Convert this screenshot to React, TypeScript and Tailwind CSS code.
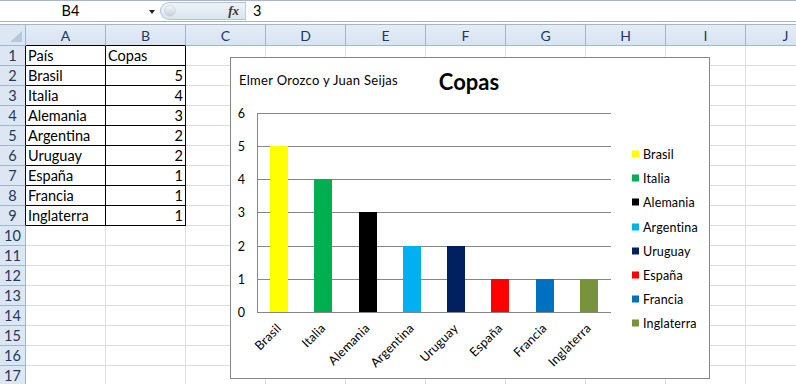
import React from "react";

const cols = ["A", "B", "C", "D", "E", "F", "G", "H", "I", "J"];

const data: [string, number, string][] = [
  ["Brasil", 5, "#FFFF00"],
  ["Italia", 4, "#00B050"],
  ["Alemania", 3, "#000000"],
  ["Argentina", 2, "#00B0F0"],
  ["Uruguay", 2, "#002060"],
  ["España", 1, "#FF0000"],
  ["Francia", 1, "#0070C0"],
  ["Inglaterra", 1, "#77933C"],
];

const font = { fontFamily: "Lato, 'Liberation Sans', sans-serif" };

function FormulaBar() {
  return (
    <>
      <div className="flex h-[22px] border-y border-[#a7b5c7] bg-white">
        <div className="relative flex w-[160px] items-center">
          <span className="w-[141px] text-center text-[14.5px] text-black">B4</span>
          <span className="absolute left-[149px] top-[9px] h-0 w-0 border-x-[3.5px] border-t-[4px] border-x-transparent border-t-[#222]" />
        </div>
        <div className="mt-[1px] flex h-[18px] w-[85px] items-center rounded-l-full border border-r-0 border-[#b4c3d6] bg-gradient-to-b from-[#eef3fa] to-[#d9e4f2]">
          <span className="ml-[3px] h-[12px] w-[12px] rounded-full border border-[#d3dae3] bg-gradient-to-b from-[#f4f6f9] to-[#c7ced8]" />
          <span
            className="ml-auto mr-[6px] text-[13px] font-bold italic text-[#333]"
            style={{ fontFamily: "'Liberation Serif', serif" }}
          >
            fx
          </span>
        </div>
        <div className="flex flex-1 items-center border-l border-[#c3ccd8] pl-[7px] text-[14.5px] text-black">
          3
        </div>
      </div>
      <div className="h-[3px] border-b border-[#a7b5c7] bg-white" />
    </>
  );
}

function Sheet() {
  const rows = Array.from({ length: 17 }, (_, i) => i + 1);
  return (
    <div className="grid grid-cols-[26px_repeat(10,80px)]">
      <div className="relative h-[21px] border-r border-b border-[#9eb6ce] bg-[#dde7f3]">
        <svg className="absolute left-[10px] top-[6px]" width="13" height="12">
          <polygon points="12,0 12,11 0,11" fill="#b9c7d8" />
        </svg>
      </div>
      {cols.map((c, i) => (
        <div
          key={c}
          className={`flex h-[21px] items-center justify-center border-r border-b border-r-[#9eb6ce] bg-gradient-to-b from-[#e4ecf6] to-[#d9e4f1] text-[14px] text-[#203864] ${
            i < 2 ? "border-b-black" : "border-b-[#9eb6ce]"
          }`}
        >
          {c}
        </div>
      ))}
      {rows.map((r) => {
        const inTable = r <= 9;
        return (
          <React.Fragment key={r}>
            <div
              className={`h-[20px] border-r border-b border-b-[#9eb6ce] bg-[#dde7f3] text-center text-[14.5px] leading-[20px] text-[#203864] ${
                inTable ? "border-r-black" : "border-r-[#9eb6ce]"
              }`}
            >
              {r}
            </div>
            {cols.map((c, ci) => {
              const black = inTable && ci < 2;
              let content: React.ReactNode = null;
              if (inTable && ci === 0) content = r === 1 ? "País" : data[r - 2][0];
              if (inTable && ci === 1) content = r === 1 ? "Copas" : data[r - 2][1];
              const right = ci === 1 && r > 1;
              return (
                <div
                  key={c}
                  className={`h-[20px] overflow-hidden whitespace-nowrap border-r border-b px-[2px] text-[14.5px] leading-[20px] text-black ${
                    black ? "border-black" : "border-[#dadcdd]"
                  } ${right ? "text-right" : "text-left"}`}
                >
                  {content}
                </div>
              );
            })}
          </React.Fragment>
        );
      })}
    </div>
  );
}

function Chart() {
  const x0 = 257;
  const x1 = 611;
  const zero = 312;
  const unit = 33.17;
  const step = (x1 - x0) / 8;
  const gy = (v: number) => Math.round(zero - v * unit) + 0.5;
  const legendY = [154, 178, 202, 227, 251, 275, 299, 323];
  return (
    <div className="absolute left-[230px] top-[57px] h-[322px] w-[480px] border border-[#868686] bg-white">
      <svg width="478" height="320" className="block" style={font}>
        <g transform="translate(-231,-58)">
          <text x="239" y="85" fontSize="13" letterSpacing="0.3" fill="#000">
            Elmer Orozco y Juan Seijas
          </text>
          <text x="469" y="90" fontSize="22" fontWeight="700" textAnchor="middle" fill="#000">
            Copas
          </text>
          {[0, 1, 2, 3, 4, 5, 6].map((v) => (
            <g key={v}>
              <line x1={x0} x2={x1} y1={gy(v)} y2={gy(v)} stroke="#868686" strokeWidth="1" />
              <text x="245" y={gy(v) + 4.5} fontSize="12.5" textAnchor="end" fill="#000">
                {v}
              </text>
            </g>
          ))}
          <line x1={x0 + 0.5} x2={x0 + 0.5} y1={gy(6)} y2={gy(0)} stroke="#868686" strokeWidth="1" />
          {data.map(([name, v, color], i) => {
            const bx = Math.round(x0 + i * step + 13);
            const top = Math.round(zero - v * unit);
            const ax = x0 + i * step + 25;
            const ay = 329;
            return (
              <g key={name}>
                <rect x={bx} y={top} width="18" height={zero - top} fill={color} />
                <text
                  x={ax}
                  y={ay}
                  fontSize="12.5"
                  letterSpacing="0.2"
                  textAnchor="end"
                  fill="#000"
                  transform={`rotate(-45 ${ax} ${ay})`}
                >
                  {name}
                </text>
              </g>
            );
          })}
          {data.map(([name, , color], i) => (
            <g key={name}>
              <rect x="632" y={legendY[i] - 3.5} width="7" height="7" fill={color} />
              <text x="643" y={legendY[i] + 4.5} fontSize="12.5" letterSpacing="0.15" fill="#000">
                {name}
              </text>
            </g>
          ))}
        </g>
      </svg>
    </div>
  );
}

export default function App() {
  return (
    <div className="relative h-[384px] w-[796px] overflow-hidden bg-white" style={font}>
      <FormulaBar />
      <Sheet />
      <Chart />
    </div>
  );
}
